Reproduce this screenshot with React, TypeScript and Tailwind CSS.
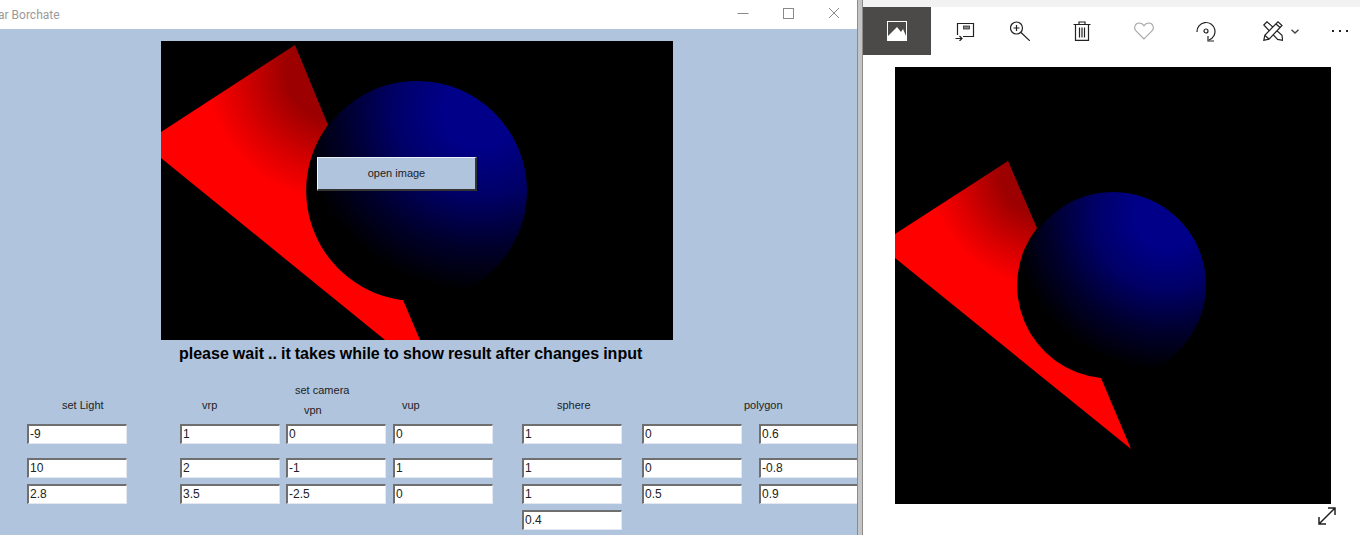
/* ── Datos ───────────────────────────────────────────────────────────────── */

const ROWS = [
  { cls: 'mb-[14px]', values: ['-9', '1', '0', '0', '1', '0', '0.6'] },
  { cls: 'mb-[6px]', values: ['10', '2', '-1', '1', '1', '0', '-0.8'] },
  { cls: 'mb-[6px]', values: ['2.8', '3.5', '-2.5', '0', '1', '0.5', '0.9'] },
  { cls: '', values: ['', '', '', '', '0.4', '', ''] },
];

/* ── Piezas ──────────────────────────────────────────────────────────────── */

const Field = ({ value }: { value: string }) => (
  <div className="h-[20px] w-[100px] overflow-hidden border-t-2 border-l-2 border-r border-b border-t-[#6f6f6f] border-l-[#6f6f6f] border-r-[#e4e9f1] border-b-[#e4e9f1] bg-white pl-px text-[12px] leading-[16px] text-[#222]">
    {value}
  </div>
);

const BlueStops = () => (
  <>
    <stop offset="0.2" stopColor="#000088" />
    <stop offset="0.45" stopColor="#000068" />
    <stop offset="0.72" stopColor="#00002c" />
    <stop offset="0.96" stopColor="#000000" />
  </>
);

const RedStops = () => (
  <>
    <stop offset="0.38" stopColor="#9c0000" />
    <stop offset="0.77" stopColor="#dd0000" />
    <stop offset="1" stopColor="#ff0000" />
  </>
);

const RenderA = () => (
  <svg viewBox="0 0 512 299" className="block h-[299px] w-[512px] bg-black">
    <defs>
      <radialGradient id="redA" gradientUnits="userSpaceOnUse" cx="175" cy="30" r="130">
        <RedStops />
      </radialGradient>
      <radialGradient id="blueA" gradientUnits="userSpaceOnUse" cx="319" cy="69" r="190">
        <BlueStops />
      </radialGradient>
    </defs>
    <path d="M0 91 L134 4 L167 84 A110 110 0 0 0 242 259 L259 299 L224 299 L0 117 Z" fill="url(#redA)" />
    <circle cx="256" cy="150" r="110" fill="url(#blueA)" />
  </svg>
);

const RenderB = () => (
  <svg viewBox="0 0 436 437" className="block h-[437px] w-[436px] bg-black">
    <defs>
      <radialGradient id="redB" gradientUnits="userSpaceOnUse" cx="150" cy="105" r="115">
        <RedStops />
      </radialGradient>
      <radialGradient id="blueB" gradientUnits="userSpaceOnUse" cx="272" cy="149" r="162">
        <BlueStops />
      </radialGradient>
    </defs>
    <path d="M0 167 L113 94 L142 161 A93 93 0 0 0 206 311 L236 382 L0 191 Z" fill="url(#redB)" />
    <circle cx="218" cy="218" r="93" fill="url(#blueB)" />
  </svg>
);

/* ── Componente ──────────────────────────────────────────────────────────── */

export default function App() {
  return (
    <div className="flex h-[535px] w-[1360px] overflow-hidden bg-white font-['Liberation_Sans',sans-serif]">
      {/* ── Ventana izquierda ─────────────────────────────────────────────── */}
      <div className="flex w-[857px] flex-col">
        <div className="flex h-[29px] items-center justify-between bg-white">
          <span className="-ml-[2px] font-['Roboto',sans-serif] text-[12px] text-[#9a9a9a]">ar Borchate</span>
          <div className="flex items-center pb-[3px]">
            <svg width="46" height="14" viewBox="0 0 46 14"><path d="M18.5 7.5h11" stroke="#8a8a8a" /></svg>
            <svg width="46" height="14" viewBox="0 0 46 14"><rect x="18.5" y="2.5" width="10" height="10" fill="none" stroke="#8a8a8a" /></svg>
            <svg width="46" height="14" viewBox="0 0 46 14"><path d="M18 2l10 10M28 2L18 12" stroke="#8a8a8a" /></svg>
          </div>
        </div>

        <div className="flex flex-1 flex-col bg-[#b0c4de]">
          <div className="relative mt-[12px] ml-[161px] w-[512px]">
            <RenderA />
            <button className="absolute left-[156px] top-[116px] h-[34px] w-[160px] border-t border-l border-r-2 border-b-2 border-t-[#e8eef6] border-l-[#f4f7fb] border-r-[#333] border-b-[#333] bg-[#b0c4de] text-center text-[11px] text-[#222]">
              open image
            </button>
          </div>

          <p className="mt-[4px] ml-[179px] text-[16px] leading-[20px] font-bold whitespace-nowrap text-black [word-spacing:-0.4px]">
            please wait .. it takes while to show result after changes input
          </p>

          {/* Etiquetas */}
          <div className="relative mt-[18px] h-[42px] text-[11px] leading-[14px] text-[#222]">
            <div className="grid grid-cols-[153px_106px_107px_129px_120px_117px_100px] pt-[16px] pl-[27px]">
              <span className="pl-[35px]">set Light</span>
              <span className="pl-[22px]">vrp</span>
              <span className="pl-[18px] pt-[5px]">vpn</span>
              <span className="pl-[9px]">vup</span>
              <span className="pl-[35px]">sphere</span>
              <span className="col-span-2 pl-[102px]">polygon</span>
            </div>
            <span className="absolute top-[1px] left-[295px]">set camera</span>
          </div>

          {/* Campos */}
          <div className="pl-[27px]">
            {ROWS.map((row, i) => (
              <div key={i} className={`grid h-[20px] grid-cols-[153px_106px_107px_129px_120px_117px_100px] ${row.cls}`}>
                {row.values.map((v, j) => (
                  <div key={j}>{v !== '' && <Field value={v} />}</div>
                ))}
              </div>
            ))}
          </div>
        </div>
      </div>

      {/* ── Separador ─────────────────────────────────────────────────────── */}
      <div className="w-[6px] border-x border-x-[#8c8c8c] bg-[#c4c4c4]" />

      {/* ── Visor de fotos ────────────────────────────────────────────────── */}
      <div className="flex flex-1 flex-col">
        <div className="h-[7px] bg-[#f2f2f2]" />
        <div className="flex h-[48px] items-center">
          <div className="flex h-[48px] w-[68px] items-center justify-center bg-[#4c4a48]">
            <svg width="20" height="20" viewBox="0 0 20 20">
              <rect width="20" height="20" fill="#fff" />
              <path d="M1 1h18v14l-3-7-2 3-4-5-9 9z" fill="#4c4a48" />
            </svg>
          </div>

          {/* presentación */}
          <svg width="20" height="20" viewBox="0 0 20 20" fill="none" stroke="#222" strokeWidth="1.2" className="ml-[24px]">
            <path d="M2.5 14V2.5h16v13H8" />
            <rect x="8.5" y="5" width="6" height="3" fill="#888" stroke="#333" strokeWidth="0.8" />
            <path d="M0.5 17.5h6M4.5 15l2.5 2.5L4.5 20" />
          </svg>

          {/* zoom */}
          <svg width="20" height="20" viewBox="0 0 20 20" fill="none" stroke="#222" strokeWidth="1.2" className="ml-[35px]">
            <circle cx="6.5" cy="7" r="6" />
            <path d="M11 11.5L20 20M6.5 4v6M3.5 7h6" />
          </svg>

          {/* papelera */}
          <svg width="18" height="20" viewBox="0 0 18 20" fill="none" stroke="#222" strokeWidth="1.2" className="ml-[43px]">
            <path d="M0.5 3.5h17M6 3.5V1h6v2.5M2.5 3.5V19.4h13V3.5" />
            <path d="M6.5 6.5v10M9 6.5v10M11.5 6.5v10" />
          </svg>

          {/* favorito */}
          <svg width="20" height="18" viewBox="0 0 20 18" fill="none" stroke="#aaa" strokeWidth="1.2" className="ml-[43px]">
            <path d="M10 17L1.8 8.6C-0.4 6.2 0.8 1 5.2 1 7.5 1 9 2.2 10 3.8 11 2.2 12.5 1 14.8 1c4.4 0 5.6 5.2 3.4 7.6z" />
          </svg>

          {/* rotar */}
          <svg width="20" height="21" viewBox="0 0 20 21" fill="none" stroke="#222" strokeWidth="1.2" className="ml-[42px]">
            <path d="M1 11A9 9 0 1 1 13 19" />
            <path d="M12 15v5h6" />
            <circle cx="10" cy="10" r="2" />
          </svg>

          {/* editar */}
          <svg width="20" height="20" viewBox="0 0 20 20" fill="none" stroke="#222" strokeWidth="1.2" className="ml-[47px]">
            <path d="M0.8 4L4 0.8l15 13.5.6 5-5-.9z" fill="#fff" />
            <path d="M0.8 19.3l1-5L15 0.8 19 4.5 6 18.2z" fill="#fff" />
            <path d="M2 14.5l4 3.5M13 3l4 3.5" />
          </svg>

          <svg width="8" height="5" viewBox="0 0 8 5" fill="none" stroke="#444" strokeWidth="1.4" className="ml-[8px]">
            <path d="M0.5 0.7L4 4l3.5-3.3" />
          </svg>

          <div className="ml-[33px] flex gap-[5px]">
            <span className="h-[2px] w-[2px] bg-[#222]" />
            <span className="h-[2px] w-[2px] bg-[#222]" />
            <span className="h-[2px] w-[2px] bg-[#222]" />
          </div>
        </div>

        <div className="mt-[12px] ml-[32px]">
          <RenderB />
        </div>
        <div className="mt-[2px] mr-[23px] flex justify-end">
          <svg width="20" height="20" viewBox="0 0 20 20" fill="none" stroke="#222" strokeWidth="1.5">
            <path d="M2 18L18 2M11 2h7v7M2 11v7h7" />
          </svg>
        </div>
      </div>
    </div>
  );
}
